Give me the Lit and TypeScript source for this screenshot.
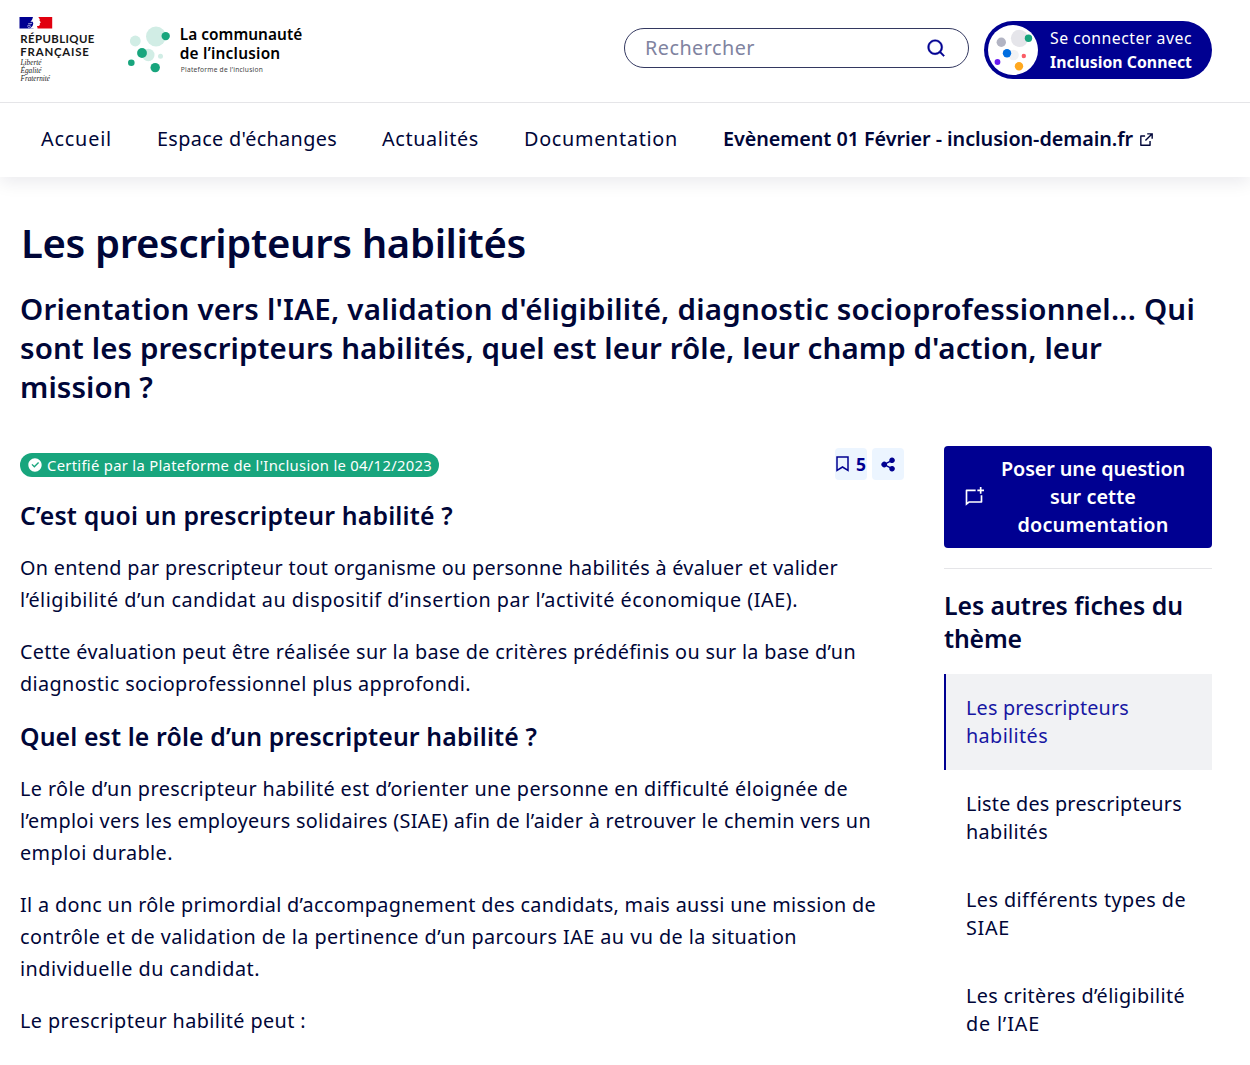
import { LitElement, html, css, svg } from "lit";
import { customElement, property } from "lit/decorators.js";

/** One line of text, tracked so that it fills a given measure. */
@customElement("text-line")
class TextLine extends LitElement {
  @property({ type: Number }) measure = 0;

  static styles = css`
    :host {
      display: block;
      width: max-content;
      white-space: nowrap;
    }
  `;

  updated() {
    this.style.letterSpacing = "0px";
    const natural = this.getBoundingClientRect().width;
    const count = (this.textContent ?? "").trim().length;
    if (this.measure && count > 1) {
      this.style.letterSpacing = `${(this.measure - natural) / count}px`;
    }
  }

  render() {
    return html`<slot></slot>`;
  }
}

type Line = [string, number];
const lines = (items: Line[]) =>
  items.map(([text, w]) => html`<text-line .measure=${w}>${text}</text-line>`);

const icon = (path: string, cls: string) =>
  html`<svg class="icon ${cls}" viewBox="0 0 24 24"><path d=${path} /></svg>`;

const ICONS = {
  search:
    "M18.031 16.617l4.283 4.282-1.415 1.415-4.282-4.283A8.96 8.96 0 0 1 11 20c-4.968 0-9-4.032-9-9s4.032-9 9-9 9 4.032 9 9a8.96 8.96 0 0 1-1.969 5.617zm-2.006-.742A6.977 6.977 0 0 0 18 11c0-3.868-3.133-7-7-7-3.868 0-7 3.132-7 7 0 3.867 3.132 7 7 7a6.977 6.977 0 0 0 4.875-1.975l.15-.15z",
  external:
    "M10 6v2H5v11h11v-5h2v6a1 1 0 0 1-1 1H4a1 1 0 0 1-1-1V7a1 1 0 0 1 1-1h6zm11-3v8h-2V6.413l-7.793 7.794-1.414-1.414L17.585 5H13V3h8z",
  share:
    "M13.12 17.023l-4.199-2.29a4 4 0 1 1 0-5.465l4.2-2.29a4 4 0 1 1 .959 1.755l-4.2 2.29a4.008 4.008 0 0 1 0 1.954l4.199 2.29a4 4 0 1 1-.959 1.755z",
  chat: "M14 3v2H4v13.385L5.763 17H20v-7h2v8a1 1 0 0 1-1 1H6.455L2 22.5V4a1 1 0 0 1 1-1h11zm5 0V0h2v3h3v2h-3v3h-2V5h-3V3h3z",
  check:
    "M12 22C6.477 22 2 17.523 2 12S6.477 2 12 2s10 4.477 10 10-4.477 10-10 10zm-.997-6l7.07-7.071-1.414-1.414-5.656 5.657-2.829-2.829-1.414 1.414L11.003 16z",
};

const NAV: Line[] = [
  ["Accueil", 71],
  ["Espace d'échanges", 180],
  ["Actualités", 97],
  ["Documentation", 154],
];

const ARTICLE: { kind: "title" | "para"; text: Line[] }[] = [
  { kind: "title", text: [["C’est quoi un prescripteur habilité ?", 433]] },
  {
    kind: "para",
    text: [
      ["On entend par prescripteur tout organisme ou personne habilités à évaluer et valider", 818],
      ["l’éligibilité d’un candidat au dispositif d’insertion par l’activité économique (IAE).", 778],
    ],
  },
  {
    kind: "para",
    text: [
      ["Cette évaluation peut être réalisée sur la base de critères prédéfinis ou sur la base d’un", 836],
      ["diagnostic socioprofessionnel plus approfondi.", 451],
    ],
  },
  { kind: "title", text: [["Quel est le rôle d’un prescripteur habilité ?", 517]] },
  {
    kind: "para",
    text: [
      ["Le rôle d’un prescripteur habilité est d’orienter une personne en difficulté éloignée de", 828],
      ["l’emploi vers les employeurs solidaires (SIAE) afin de l’aider à retrouver le chemin vers un", 851],
      ["emploi durable.", 153],
    ],
  },
  {
    kind: "para",
    text: [
      ["Il a donc un rôle primordial d’accompagnement des candidats, mais aussi une mission de", 856],
      ["contrôle et de validation de la pertinence d’un parcours IAE au vu de la situation", 777],
      ["individuelle du candidat.", 240],
    ],
  },
  { kind: "para", text: [["Le prescripteur habilité peut :", 286]] },
];

const SHEETS: Line[][] = [
  [["Les prescripteurs", 163], ["habilités", 82]],
  [["Liste des prescripteurs", 216], ["habilités", 82]],
  [["Les différents types de", 220], ["SIAE", 44]],
  [["Les critères d’éligibilité", 219], ["de l’IAE", 74]],
];

@customElement("app-root")
class AppRoot extends LitElement {
  static styles = css`
    :host {
      display: block;
      height: 1065px;
      overflow: hidden;
      background: #fff;
      color: #000638;
      font-family: "Noto Sans", sans-serif;
      font-size: 19.8px;
      line-height: 32px;
      font-variant-ligatures: none;
    }
    * {
      box-sizing: border-box;
    }
    h1, h2, h3, p, ul {
      margin: 0;
      padding: 0;
    }
    svg {
      display: block;
      flex: none;
    }
    .icon {
      fill: currentColor;
    }
    .s16 { width: 16px; height: 16px; }
    .s17 { width: 17px; height: 17px; }
    .s20 { width: 20px; height: 20px; }

    .topbar {
      display: flex;
      height: 103px;
      padding-right: 38px;
      border-bottom: 1px solid #e5e5e8;
    }
    .brand {
      width: 320px;
      height: 90px;
      margin-right: auto;
    }
    .search {
      display: flex;
      align-items: center;
      justify-content: space-between;
      width: 345px;
      height: 40px;
      margin: 28px 15px 0 0;
      padding: 0 22px 0 20px;
      border: 1px solid #333860;
      border-radius: 20px;
      color: #8083a0;
    }
    .search .icon {
      color: #000091;
      stroke: currentColor;
      stroke-width: 0.5;
    }
    .connect {
      display: flex;
      align-items: center;
      width: 228px;
      height: 58px;
      margin-top: 21px;
      padding-left: 4px;
      gap: 12px;
      border-radius: 29px;
      background: #000091;
      color: #fff;
      font-size: 15.8px;
      line-height: 24px;
    }
    .connect-text {
      padding-bottom: 1px;
    }
    .strong {
      font-weight: 700;
    }
    .nav {
      display: flex;
      align-items: center;
      gap: 45px;
      height: 74px;
      padding: 0 0 2px 41px;
      box-shadow: 0 6px 16px rgba(0, 6, 56, 0.08);
      clip-path: inset(0 0 -30px 0);
    }
    .event {
      display: flex;
      align-items: center;
      gap: 5px;
      font-weight: 600;
    }
    .page {
      padding: 40px 38px 0 20px;
    }
    h1 {
      padding-left: 1px;
      font-size: 40px;
      line-height: 52px;
      font-weight: 600;
    }
    h2 {
      margin-top: 20px;
      font-size: 29.5px;
      line-height: 39px;
      font-weight: 600;
    }
    h3 {
      font-size: 24.8px;
      line-height: 33px;
      font-weight: 600;
    }
    .columns {
      display: grid;
      grid-template-columns: 884px 268px;
      gap: 40px;
      margin-top: 40px;
    }
    .meta {
      display: flex;
      align-items: center;
      height: 36px;
      gap: 5px;
    }
    .badge {
      display: flex;
      align-items: center;
      width: 419px;
      height: 24px;
      margin: 1px auto 0 0;
      padding-left: 7px;
      gap: 4px;
      border-radius: 12px;
      background: #18a57d;
      color: #fff;
      font-size: 14.8px;
      line-height: 24px;
    }
    .action {
      display: flex;
      align-items: center;
      justify-content: center;
      width: 32px;
      height: 32px;
      border-radius: 4px;
      background: #ecf5ff;
      color: #000091;
      font-size: 17.5px;
      font-weight: 700;
    }
    .saved {
      gap: 7px;
    }
    .article {
      display: flex;
      flex-direction: column;
      gap: 20px;
      padding-top: 17px;
    }
    .ask {
      display: flex;
      align-items: center;
      height: 102px;
      padding: 0 27px 0 20px;
      border-radius: 4px;
      background: #000091;
      color: #fff;
      font-weight: 600;
      line-height: 28px;
    }
    .ask-text {
      display: flex;
      flex-direction: column;
      align-items: center;
      flex: 1;
      padding-left: 17px;
    }
    .others {
      margin-top: 20px;
      padding-top: 20px;
      border-top: 1px solid #e5e5e8;
    }
    .sheets {
      margin-top: 19px;
      list-style: none;
      line-height: 28px;
    }
    .sheet {
      height: 96px;
      padding: 20px 0 0 20px;
      border-left: 2px solid transparent;
    }
    .current {
      border-color: #000091;
      background: #f1f2f4;
      color: #1717a3;
    }
    .t-state {
      font-family: Lato, sans-serif;
      font-weight: 700;
      font-size: 11.4px;
    }
    .t-logo {
      font-weight: 600;
      font-size: 15.4px;
    }
    .t-motto {
      font-family: "Liberation Serif", serif;
      font-style: italic;
      font-size: 7.6px;
    }
    .t-small {
      font-size: 6.6px;
    }
  `;

  private brand() {
    const label = (cls: string, x: number, y: number, len: number, text: string, fill: string) => svg`
      <text class=${cls} x=${x} y=${y} textLength=${len} fill=${fill}>${text}</text>`;
    const motto = (y: number, len: number, text: string) => svg`
      <text class="t-motto" x="20.5" y=${y} textLength=${len} lengthAdjust="spacingAndGlyphs" fill="#222">${text}</text>`;
    return html`
      <svg class="brand" viewBox="0 0 320 90">
        <rect x="19.5" y="17" width="14" height="11.5" fill="#000091" />
        <rect x="37" y="17" width="15.2" height="11.5" fill="#e1000f" />
        <path d="M33 17h5.3l1.5 2.2-.3 1.2 1.4 2-1.1.7.1 2-1.3.9-1.4.1-.2 1 1.3 1.4H30l2.5-2.6 1-2.6-1.2-1.7-1.9.4 1.8-2.4z" fill="#fff" />
        <path d="M27 26.2l3.6-1.2M28 23.9l4-.6M28 27.9l3-1.4" stroke="#c5c5e8" stroke-width=".8" fill="none" />
        ${label("t-state", 20.3, 43, 74, "RÉPUBLIQUE", "#161616")}
        ${label("t-state", 20.3, 55.5, 68.5, "FRANÇAISE", "#161616")}
        ${motto(65.3, 21, "Liberté")}
        ${motto(73.3, 21, "Égalité")}
        ${motto(81.3, 29.5, "Fraternité")}
        <g fill="#d1ede5">
          <circle cx="156" cy="36.5" r="10" />
          <circle cx="135.3" cy="41" r="5.4" />
          <circle cx="148.3" cy="55" r="6.2" />
          <circle cx="160.5" cy="56.3" r="2.5" />
        </g>
        <g fill="#18a57d">
          <circle cx="165.7" cy="36.1" r="4.2" />
          <circle cx="142" cy="53" r="4.9" />
          <circle cx="131.3" cy="62.7" r="3.3" />
          <circle cx="155.2" cy="67.6" r="4.7" />
        </g>
        ${label("t-logo", 179.7, 40, 122.5, "La communauté", "#000")}
        ${label("t-logo", 179.7, 58.8, 100.5, "de l’inclusion", "#000")}
        <text class="t-small" x="180.8" y="72" textLength="82" fill="#444">Plateforme de l’inclusion</text>
      </svg>
    `;
  }

  private connectMark() {
    return html`
      <svg width="50" height="50" viewBox="0 0 50 50">
        <circle cx="25" cy="25" r="25" fill="#fff" />
        <circle cx="31.5" cy="13.3" r="8.6" fill="#e5e5ea" />
        <circle cx="25.5" cy="30" r="5.3" fill="#f1f2f4" />
        <circle cx="13.3" cy="17.3" r="4.7" fill="#b2b4c3" />
        <circle cx="40.5" cy="13.2" r="3.7" fill="#18a57d" />
        <circle cx="19" cy="28.3" r="4.2" fill="#006ee0" />
        <circle cx="35.8" cy="31" r="2.2" fill="#fa5c65" />
        <circle cx="9.5" cy="37" r="2.9" fill="#6a1af0" />
        <circle cx="31" cy="41.3" r="4.2" fill="#ffa81f" />
      </svg>
    `;
  }

  render() {
    return html`
      <header>
        <div class="topbar">
          ${this.brand()}
          <div class="search">
            <text-line .measure=${110}>Rechercher</text-line>
            ${icon(ICONS.search, "s20")}
          </div>
          <div class="connect">
            ${this.connectMark()}
            <div class="connect-text">
              <text-line .measure=${142}>Se connecter avec</text-line>
              <text-line class="strong" .measure=${142}>Inclusion Connect</text-line>
            </div>
          </div>
        </div>
        <nav class="nav">
          ${lines(NAV)}
          <div class="event">
            <text-line .measure=${410}>Evènement 01 Février - inclusion-demain.fr</text-line>
            ${icon(ICONS.external, "s17")}
          </div>
        </nav>
      </header>
      <main class="page">
        <h1>${lines([["Les prescripteurs habilités", 505]])}</h1>
        <h2>
          ${lines([
            ["Orientation vers l'IAE, validation d'éligibilité, diagnostic socioprofessionnel... Qui", 1175],
            ["sont les prescripteurs habilités, quel est leur rôle, leur champ d'action, leur", 1082],
            ["mission ?", 133],
          ])}
        </h2>
        <div class="columns">
          <section>
            <div class="meta">
              <div class="badge">
                ${icon(ICONS.check, "s16")}
                <text-line .measure=${385}>Certifié par la Plateforme de l'Inclusion le 04/12/2023</text-line>
              </div>
              <div class="action saved">
                <svg width="13" height="16" viewBox="0 0 13 16">
                  <path d="M1 1h11v13.5L6.5 11 1 14.5z" fill="none" stroke="currentColor" stroke-width="1.5" />
                </svg>
                5
              </div>
              <div class="action">${icon(ICONS.share, "s17")}</div>
            </div>
            <div class="article">
              ${ARTICLE.map((b) =>
                b.kind === "title" ? html`<h3>${lines(b.text)}</h3>` : html`<p>${lines(b.text)}</p>`
              )}
            </div>
          </section>
          <aside>
            <div class="ask">
              ${icon(ICONS.chat, "s20")}
              <div class="ask-text">
                ${lines([["Poser une question", 184], ["sur cette", 86], ["documentation", 151]])}
              </div>
            </div>
            <div class="others">
              <h3>${lines([["Les autres fiches du", 239], ["thème", 78]])}</h3>
              <ul class="sheets">
                ${SHEETS.map(
                  (s, i) => html`<li class="sheet ${i === 0 ? "current" : ""}">${lines(s)}</li>`
                )}
              </ul>
            </div>
          </aside>
        </div>
      </main>
    `;
  }
}
